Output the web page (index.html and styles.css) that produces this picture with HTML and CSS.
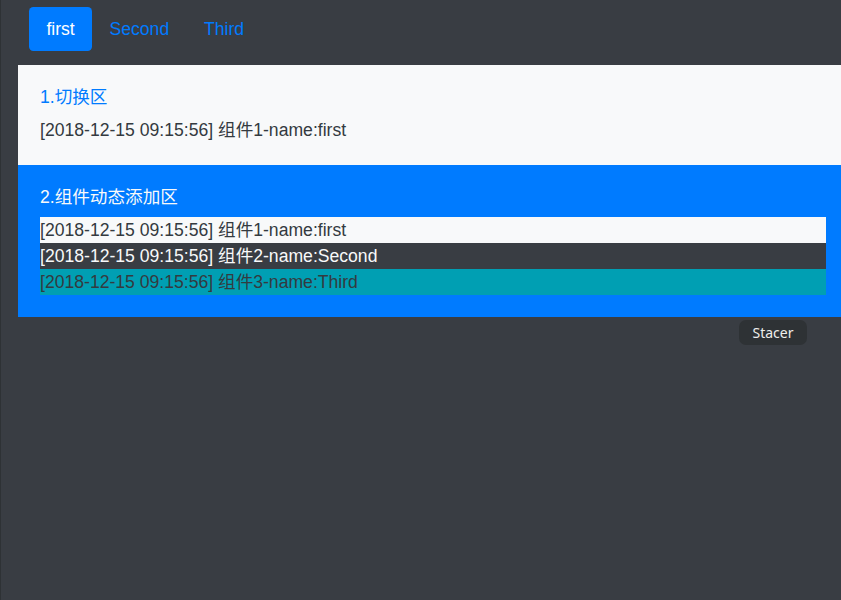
FILE: index.html
```html
<!DOCTYPE html>
<html lang="zh">
<head>
<meta charset="utf-8">
<title>Tabs</title>
<link rel="stylesheet" href="styles.css">
</head>
<body>
<div class="page">
  <nav class="nav">
    <a class="pill active">first</a>
    <a class="pill">Second</a>
    <a class="pill">Third</a>
  </nav>
  <section class="panel light">
    <div class="title">1.切换区</div>
    <div class="line">[2018-12-15 09:15:56] 组件1-name:first</div>
  </section>
  <section class="panel blue">
    <div class="title">2.组件动态添加区</div>
    <div class="rows">
      <div class="row row-light">[2018-12-15 09:15:56] 组件1-name:first</div>
      <div class="row row-dark">[2018-12-15 09:15:56] 组件2-name:Second</div>
      <div class="row row-info">[2018-12-15 09:15:56] 组件3-name:Third</div>
    </div>
  </section>
  <div class="tooltip">Stacer</div>
</div>
</body>
</html>
```

FILE: styles.css
```css
html, body {
  margin: 0;
  padding: 0;
  height: 100%;
  overflow: hidden;
}
body {
  background: #393d43;
  border-left: 1px solid #2e3235;
  box-sizing: border-box;
  font-family: "Liberation Sans", "Noto Sans CJK SC", sans-serif;
  font-size: 17.6px;
  line-height: 26.4px;
  color: #343a40;
}
.page {
  position: relative;
  height: 100%;
}
.nav {
  display: flex;
  padding: 7px 0 14px 28px;
}
.pill {
  display: block;
  padding: 8.8px 17.4px;
  color: #007bff;
  border-radius: 4.4px;
  text-decoration: none;
}
.pill.active {
  background: #007bff;
  color: #fff;
}
.panel {
  margin-left: 17px;
  padding: 19px 15px 22px 22px;
}
.light {
  background: #f8f9fa;
}
.blue {
  background: #007bff;
}
.title {
  height: 26px;
  line-height: 26px;
  margin-bottom: 7px;
}
.light .title {
  color: #007bff;
}
.blue .title {
  color: #f8f9fa;
}
.line {
  height: 26px;
  line-height: 26px;
}
.rows {
  display: flex;
  flex-direction: column;
}
.row {
  height: 26px;
  line-height: 26px;
}
.row-light {
  background: #f8f9fa;
  color: #343a40;
}
.row-dark {
  background: #393d43;
  color: #f8f9fa;
}
.row-info {
  background: #009fb3;
  color: #343a40;
}
.tooltip {
  position: absolute;
  left: 738px;
  top: 320px;
  width: 68px;
  height: 25px;
  box-sizing: border-box;
  background: #2e3235;
  border-radius: 7px;
  color: #eeeeec;
  font-family: "Noto Sans", "DejaVu Sans", sans-serif;
  font-size: 14px;
  line-height: 25px;
  text-align: center;
}
```
